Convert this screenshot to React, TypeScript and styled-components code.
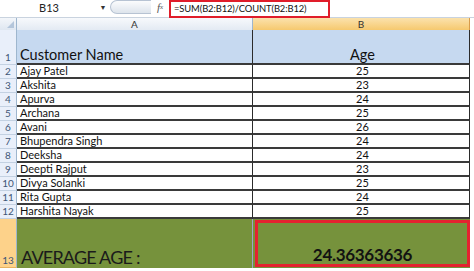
import styled, { createGlobalStyle } from "styled-components";

const GlobalStyle = createGlobalStyle`
  html, body {
    margin: 0;
    padding: 0;
    background: #ffffff;
  }
  body {
    width: 474px;
    height: 271px;
    overflow: hidden;
    font-family: Lato, "Open Sans", sans-serif;
    color: #111;
  }
`;

const Window = styled.div`
  display: flex;
  flex-direction: column;
  width: 474px;
  height: 271px;
  background: #ffffff;
`;

const FormulaBar = styled.div`
  display: flex;
  align-items: stretch;
  height: 17px;
  background: #ffffff;
  border-bottom: 1px solid #c9d3df;
`;

const NameBox = styled.div`
  width: 98px;
  display: flex;
  align-items: center;
  justify-content: center;
  font-size: 11px;
  color: #222;
  padding-bottom: 3px;
`;

const Dropdown = styled.div`
  width: 10px;
  display: flex;
  align-items: center;
  justify-content: center;
  padding-bottom: 3px;
  font-size: 7px;
  color: #333;
`;

const Grip = styled.div`
  width: 40px;
  height: 12px;
  margin-left: 2px;
  border: 1px solid #b7c3d3;
  border-right: none;
  border-radius: 7px 0 0 7px;
  background: linear-gradient(#fbfcfd, #dde4ec);
`;

const FxLabel = styled.div`
  width: 18px;
  display: flex;
  align-items: center;
  justify-content: center;
  padding-bottom: 3px;
  font-family: "Liberation Serif", serif;
  font-style: italic;
  font-size: 11px;
  color: #555;
  sub {
    font-size: 7px;
    vertical-align: -1px;
  }
`;

const FormulaInput = styled.div`
  box-sizing: border-box;
  width: 161px;
  height: 18px;
  border: 2px solid #e01d2a;
  padding: 0 0 1px 3px;
  display: flex;
  align-items: center;
  font-size: 9.4px;
  letter-spacing: -0.1px;
  color: #111;
  background: #fff;
  white-space: nowrap;
  overflow: hidden;
  position: relative;
  z-index: 1;
`;

const Row = styled.div<{ $h: number }>`
  display: grid;
  grid-template-columns: 17px 236px 217px 1fr;
  height: ${(p) => p.$h}px;
`;

const Corner = styled.div`
  background: linear-gradient(#f3f6fa, #dfe7f1);
  border-right: 1px solid #9eb6ce;
  border-bottom: 1px solid #9eb6ce;
  display: flex;
  align-items: flex-end;
  justify-content: flex-end;
  padding: 0 2px 2px 0;
  &::after {
    content: "";
    width: 0;
    height: 0;
    border-left: 7px solid transparent;
    border-bottom: 7px solid #b4c6db;
  }
`;

const ColHead = styled.div<{ $sel?: boolean }>`
  display: flex;
  align-items: center;
  justify-content: center;
  font-size: 10px;
  color: #333;
  background: ${(p) =>
    p.$sel
      ? "linear-gradient(#fbe2ad, #f6c96f)"
      : "linear-gradient(#f7f9fc, #e3eaf3)"};
  border-right: 1px solid ${(p) => (p.$sel ? "#d89b4a" : "#9eb6ce")};
  border-bottom: 1px solid ${(p) => (p.$sel ? "#e0a54e" : "#9eb6ce")};
`;

const Trail = styled.div`
  background: #ffffff;
`;

const RowNum = styled.div<{ $sel?: boolean }>`
  display: flex;
  align-items: flex-end;
  justify-content: center;
  padding-bottom: 1px;
  font-size: 10px;
  color: #3e5676;
  background: ${(p) => (p.$sel ? "#fdd28a" : "#e9effa")};
  border-right: 1px solid #9eb6ce;
  border-bottom: 1px solid ${(p) => (p.$sel ? "#e8b25f" : "#c3d1e2")};
`;

const Cell = styled.div<{ $center?: boolean; $fill?: string; $size?: number }>`
  display: flex;
  align-items: flex-end;
  justify-content: ${(p) => (p.$center ? "center" : "flex-start")};
  padding: 0 0 1px 3px;
  font-size: ${(p) => p.$size ?? 11}px;
  background: ${(p) => p.$fill ?? "#ffffff"};
  border-right: 1px solid #2b2b2b;
  border-bottom: 2px solid #3a3a3a;
  box-sizing: border-box;
  line-height: 1;
  white-space: nowrap;
`;

const TotalLabel = styled(Cell)`
  font-size: 18px;
  letter-spacing: -0.8px;
  color: #1b1b1b;
  padding: 0 0 2px 4px;
  border-bottom: none;
`;

const TotalWrap = styled.div`
  display: flex;
  align-items: stretch;
  padding: 1px 0 1px 2px;
  background: #76923c;
  border-left: 1px solid #9aa7c8;
  margin-left: -1px;
`;

const TotalValue = styled.div`
  flex: 1;
  display: flex;
  align-items: flex-end;
  justify-content: center;
  border: 3px solid #e32330;
  background: #76923c;
  font-size: 17px;
  letter-spacing: -0.3px;
  font-weight: 700;
  color: #121212;
  padding-bottom: 1px;
  line-height: 1;
`;

const rows: [string, number][] = [
  ["Ajay Patel", 25],
  ["Akshita", 23],
  ["Apurva", 24],
  ["Archana", 25],
  ["Avani", 26],
  ["Bhupendra Singh", 24],
  ["Deeksha", 24],
  ["Deepti Rajput", 23],
  ["Divya Solanki", 25],
  ["Rita Gupta", 24],
  ["Harshita Nayak", 25],
];

const GREEN = "#76923c";
const HEADER_BLUE = "#c6d9f0";

export default function App() {
  return (
    <Window>
      <GlobalStyle />
      <FormulaBar>
        <NameBox>B13</NameBox>
        <Dropdown>▼</Dropdown>
        <Grip />
        <FxLabel>
          f<sub>x</sub>
        </FxLabel>
        <FormulaInput>=SUM(B2:B12)/COUNT(B2:B12)</FormulaInput>
      </FormulaBar>

      <Row $h={12}>
        <Corner />
        <ColHead>A</ColHead>
        <ColHead $sel>B</ColHead>
        <Trail />
      </Row>

      <Row $h={35}>
        <RowNum>1</RowNum>
        <Cell $fill={HEADER_BLUE} $size={14.5}>
          Customer Name
        </Cell>
        <Cell $fill={HEADER_BLUE} $size={14.5} $center>
          Age
        </Cell>
        <Trail />
      </Row>

      {rows.map(([name, age], i) => (
        <Row $h={14} key={name}>
          <RowNum>{i + 2}</RowNum>
          <Cell>{name}</Cell>
          <Cell $center>{age}</Cell>
          <Trail />
        </Row>
      ))}

      <Row $h={49}>
        <RowNum $sel>13</RowNum>
        <TotalLabel $fill={GREEN}>AVERAGE AGE :</TotalLabel>
        <TotalWrap>
          <TotalValue>24.36363636</TotalValue>
        </TotalWrap>
        <Trail />
      </Row>
    </Window>
  );
}
